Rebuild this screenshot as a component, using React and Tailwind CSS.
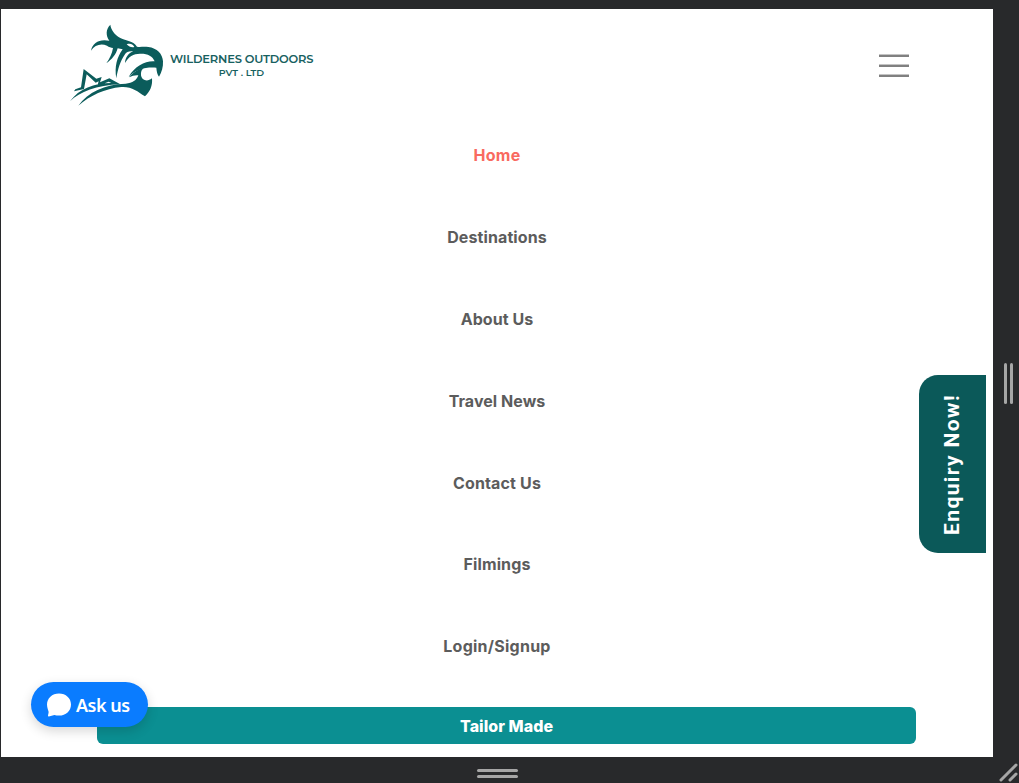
const links = [
  { label: "Home", style: "text-[#f96a60] tracking-[0.3px]" },
  { label: "Destinations", style: "text-[#5c5c5c] tracking-[0.1px]" },
  { label: "About Us", style: "text-[#5c5c5c] tracking-[0.05px]" },
  { label: "Travel News", style: "text-[#5c5c5c] tracking-[0.05px]" },
  { label: "Contact Us", style: "text-[#5c5c5c] tracking-[0.15px]" },
  { label: "Filmings", style: "text-[#5c5c5c] tracking-[0.15px]" },
  { label: "Login/Signup", style: "text-[#5c5c5c] tracking-[0.25px]" },
];

function EagleMark() {
  return (
    <svg viewBox="0 0 360 300" className="h-[100px] w-[120px] shrink-0" fill="#0b5c5b">
      <path d="M151 29C137 43 137 61 148 77C119 71 98 82 93 107C104 89 124 84 141 92C147 96 153 98 159 99C156 116 149 131 139 145C156 133 168 119 173 100L188 103C171 126 163 155 169 190C174 160 181 139 194 119C200 109 208 108 220 109C205 115 196 127 195 144C206 124 222 115 243 116C264 116 278 124 284 139C255 137 226 153 206 185C231 161 257 156 289 158C290 170 292 178 297 185C305 173 310 156 309 139C308 117 291 99 265 96C251 94 239 97 231 95C218 76 199 79 181 69C163 58 153 45 151 29ZM200 88C212 84 220 89 223 96C214 98 207 95 200 88Z" fillRule="evenodd" />
      <path d="M252 158C236 162 218 172 207 187C217 182 226 180 235 181C230 196 218 204 197 206C134 208 83 232 55 272C91 241 134 221 184 216C215 214 232 229 255 244C270 230 278 213 276 190C261 202 245 195 243 181C242 170 245 163 252 158Z" />
      <path d="M30 259C60 230 109 211 181 208L148 190L120 202L125 186L109 191L71 162L63 217L46 223L42 229L72 222L80 178L107 203L116 199L112 213L146 200L154 204C103 204 57 221 30 259Z" />
    </svg>
  );
}

export default function App() {
  return (
    <div className="relative flex h-[783px] w-[1019px] flex-col overflow-hidden bg-[#28292b] pl-px pt-[9px] font-['Inter',sans-serif]">
      <div className="flex h-[748px]">
        <main className="flex w-[992px] flex-col bg-white">
          <header className="flex h-[105px] items-start justify-between pl-[59px] pr-[84px] pt-[6px]">
            <div className="flex items-start">
              <EagleMark />
              <div className="mt-[37px] ml-[-10px] w-[143px] text-center font-['Montserrat','Inter',sans-serif] font-semibold text-[#17615f]">
                <div className="whitespace-nowrap text-[11.5px] leading-[14px] tracking-[-0.18px]">WILDERNES OUTDOORS</div>
                <div className="text-[9.5px] leading-[13px]">PVT . LTD</div>
              </div>
            </div>
            <button aria-label="Menu" className="mt-[39px] flex w-[30px] flex-col gap-[7px]">
              <span className="h-[3px] w-full border-t border-[#c4c4c4] bg-[#808080]" />
              <span className="h-[3px] w-full border-t border-[#c4c4c4] bg-[#808080]" />
              <span className="h-[3px] w-full border-t border-[#c4c4c4] bg-[#808080]" />
            </button>
          </header>
          <nav className="flex flex-col pt-[0.3px]">
            {links.map((l) => (
              <a key={l.label} className={`flex h-[81.83px] items-center justify-center text-base font-bold ${l.style}`}>
                {l.label}
              </a>
            ))}
          </nav>
          <button className="ml-24 mt-[19.7px] h-[37px] w-[819px] rounded-[6px] bg-[#0b8f92] pt-px text-base font-extrabold tracking-[0.05px] text-white">
            Tailor Made
          </button>
        </main>
        <div className="flex flex-1 items-center justify-center gap-[3px] pl-[5px]">
          <span className="h-[41px] w-[3px] rounded-full bg-[#a6a6a6]" />
          <span className="h-[41px] w-[3px] rounded-full bg-[#a6a6a6]" />
        </div>
      </div>
      <div className="flex h-[26px] w-[992px] flex-col items-center gap-[3px] pt-3">
        <span className="h-[3px] w-[41px] rounded-full bg-[#a6a6a6]" />
        <span className="h-[3px] w-[41px] rounded-full bg-[#a6a6a6]" />
      </div>

      <button className="absolute left-[919px] top-[375px] flex h-[178px] w-[67px] items-center justify-center rounded-l-[19px] bg-[#0b5959]">
        <span className="rotate-180 whitespace-nowrap font-['Roboto',sans-serif] text-[21px] font-bold tracking-[1.4px] text-white [writing-mode:vertical-rl]">
          Enquiry Now!
        </span>
      </button>
      <button className="absolute left-[31px] top-[682px] flex h-[45px] w-[117px] items-center gap-[5px] rounded-full bg-[#0a7cff] pl-4 text-white shadow-[0_4px_12px_rgba(0,0,0,0.16)]">
        <svg viewBox="0 0 24 24" className="h-6 w-6 shrink-0" fill="white">
          <path d="M12 .4C5.100 .4 0 5.100 0 11.500c0 3.200 1.300 5.600 1.600 7.300.1 1.500-.5 2.800-.6 3.900 0 .6.4.8.9.7l5.500-1.400c1.400.4 2.800.6 4.600.6 7 0 12-4.900 12-11.200C24 5.100 18.900.4 12 .4Z" />
        </svg>
        <span className="font-['Noto_Sans',sans-serif] text-lg font-semibold leading-6 tracking-[-0.5px]">Ask us</span>
      </button>
      <svg viewBox="0 0 19 19" className="absolute left-[999px] top-[763px] h-[19px] w-[19px]" stroke="#a6a6a6" strokeWidth="3" strokeLinecap="round">
        <path d="M2 17L17 2M11 17L17 11" />
      </svg>
    </div>
  );
}
